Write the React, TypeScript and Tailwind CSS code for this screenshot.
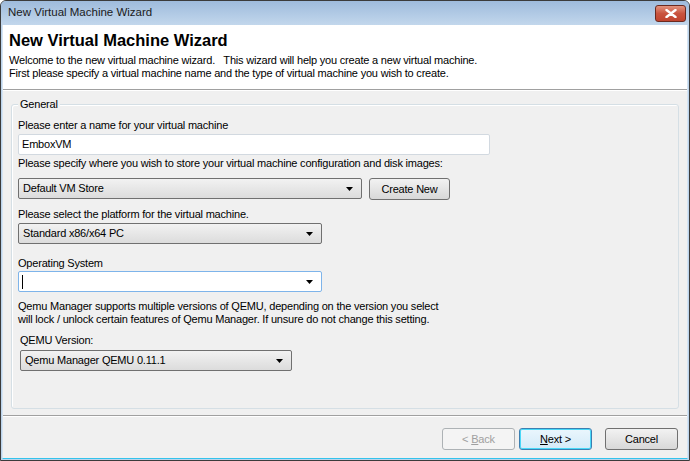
import React from 'react';

const font = { fontFamily: '"Liberation Sans", Arial, sans-serif' };

function Arrow() {
  return (
    <svg width="7" height="4" viewBox="0 0 7 4" className="shrink-0">
      <path d="M0 0h7L3.5 4z" fill="#000" />
    </svg>
  );
}

function Select({ value, width }: { value: string; width: string }) {
  return (
    <div
      className={`${width} h-[21px] flex items-center justify-between pl-[4px] pr-[8px] rounded-[2px] border bg-gradient-to-b from-[#f2f2f2] to-[#dcdcdc] border-[#707070]`}
    >
      <span className="leading-none">{value}</span>
      <Arrow />
    </div>
  );
}

function Button({ label, width, disabled, focused }: { label: React.ReactNode; width: string; disabled?: boolean; focused?: boolean }) {
  return (
    <div
      className={`${width} h-[22px] flex items-center justify-center rounded-[3px] border ${
        disabled
          ? 'border-[#adb2b5] bg-[#f4f4f4] text-[#a0a0a0]'
          : focused
            ? 'border-[#3c7fb1] bg-gradient-to-b from-[#eaf6fd] to-[#d4ebf8] text-black shadow-[inset_0_0_0_1px_#48d8f8]'
            : 'border-[#707070] bg-gradient-to-b from-[#f2f2f2] to-[#d8d8d8] text-black'
      }`}
    >
      {label}
    </div>
  );
}

export default function App() {
  return (
    <div style={font} className="w-[690px] h-[461px] flex flex-col bg-[#bcd4ec] border border-[#3b3b3b] rounded-t-[6px] overflow-hidden text-[11px] tracking-[-0.2px] text-black">
      <div className="h-[24px] shrink-0 flex items-center justify-between pl-[7px] pr-[3px] bg-gradient-to-b from-[#9ebbdc] to-[#c2d7ec]">
        <span className="text-[11.5px] tracking-normal text-[#1b1b1b]">New Virtual Machine Wizard</span>
        <div className="w-[31px] h-[17px] flex items-center justify-center rounded-[3px] border border-[#6b2a20] bg-gradient-to-b from-[#e2937f] via-[#c9543f] to-[#c0442f]">
          <svg width="12" height="9" viewBox="0 0 12 9">
            <path d="M1.5 1l9 7M10.5 1l-9 7" stroke="#fff" strokeWidth="2.4" strokeLinecap="round" />
          </svg>
        </div>
      </div>
      <div className="flex-1 flex flex-col mx-[1px] mb-[1px] border border-t-0 border-[#d6e5f3] border-b-[#33c3ec] bg-[#f0f0f0]">
        <div className="h-[65px] shrink-0 bg-white pl-[6px] pt-[5px] border-b border-[#a0a0a0]">
          <div className="text-[16.5px] tracking-normal font-bold leading-[20px]">New Virtual Machine Wizard</div>
          <div className="mt-[4px] leading-[13px] whitespace-pre">
            {'Welcome to the new virtual machine wizard.   This wizard will help you create a new virtual machine.\nFirst please specify a virtual machine name and the type of virtual machine you wish to create.'}
          </div>
        </div>
        <div className="shrink-0 pt-[13px] px-[8px] pb-[6px] border-t border-white">
          <div className="relative h-[305px] border border-[#d5dfe5] rounded-[3px] shadow-[inset_1px_1px_0_#fff] pl-[6px] pt-[13px]">
            <span className="absolute left-[6px] top-[-8px] bg-[#f0f0f0] px-[2px] leading-[14px]">General</span>
            <div className="leading-[14px]">Please enter a name for your virtual machine</div>
            <div className="mt-[2px] w-[472px] h-[21px] bg-white border border-[#d2d9e0] rounded-[2px] flex items-center pl-[3px]">EmboxVM</div>
            <div className="mt-[1px] leading-[14px]">Please specify where you wish to store your virtual machine configuration and disk images:</div>
            <div className="mt-[8px] flex gap-[7px]">
              <Select value="Default VM Store" width="w-[344px]" />
              <Button label="Create New" width="w-[81px]" />
            </div>
            <div className="mt-[7px] leading-[14px]">Please select the platform for the virtual machine.</div>
            <div className="mt-[2px]">
              <Select value="Standard x86/x64 PC" width="w-[304px]" />
            </div>
            <div className="mt-[12px] leading-[14px]">Operating System</div>
            <div className="mt-[1px] w-[304px] h-[21px] bg-white border border-[#7eb4ea] rounded-[2px] flex items-center justify-between pl-[3px] pr-[8px]">
              <div className="w-[1px] h-[14px] bg-black" />
              <Arrow />
            </div>
            <div className="mt-[8px] leading-[13px]">
              Qemu Manager supports multiple versions of QEMU, depending on the version you select
              <br />
              will lock / unlock certain features of Qemu Manager. If unsure do not change this setting.
            </div>
            <div className="mt-[7px] pl-[2px] leading-[14px]">QEMU Version:</div>
            <div className="mt-[3px] pl-[2px]">
              <Select value="Qemu Manager QEMU 0.11.1" width="w-[272px]" />
            </div>
          </div>
        </div>
        <div className="flex-1 border-t border-[#a0a0a0] shadow-[inset_0_1px_0_#fff] flex items-start justify-end pt-[12px] pr-[9px]">
          <Button label={<span>&lt; <span className="underline">B</span>ack</span>} width="w-[73px]" disabled />
          <div className="w-[4px]" />
          <Button label={<span><span className="underline">N</span>ext &gt;</span>} width="w-[73px]" focused />
          <div className="w-[13px]" />
          <Button label="Cancel" width="w-[73px]" />
        </div>
      </div>
    </div>
  );
}
